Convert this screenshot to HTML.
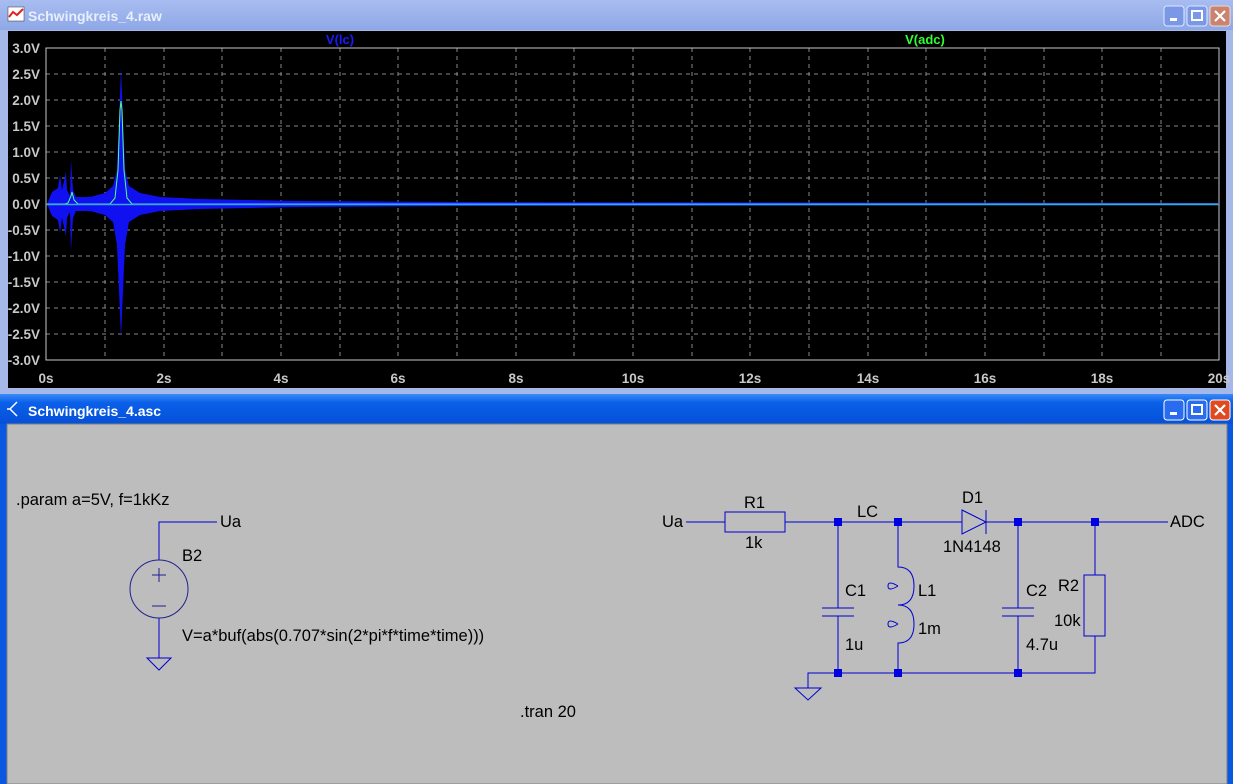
<!DOCTYPE html>
<html><head><meta charset="utf-8"><style>
body{margin:0;width:1233px;height:784px;overflow:hidden;background:#b8c8ec;font-family:"Liberation Sans",sans-serif}
svg{display:block}
</style></head><body>
<svg width="1233" height="784" viewBox="0 0 1233 784" xmlns="http://www.w3.org/2000/svg">
<defs>
<linearGradient id="ti" x1="0" y1="0" x2="0" y2="1"><stop offset="0" stop-color="#a8bcf0"/><stop offset="1" stop-color="#8ea8e6"/></linearGradient>
<linearGradient id="ta" x1="0" y1="0" x2="0" y2="1"><stop offset="0" stop-color="#3a8af8"/><stop offset="0.3" stop-color="#0a5fe8"/><stop offset="1" stop-color="#0550d8"/></linearGradient>
</defs>
<rect x="0" y="0" width="1233" height="394" fill="#a6b8e8"/>
<rect x="0" y="0" width="1233" height="30" fill="url(#ti)"/>
<g transform="translate(8,7)"><rect width="16" height="14" fill="#fff" stroke="#333" stroke-width="0.5"/><polyline points="1,10 5,5 9,8 15,2" fill="none" stroke="#e02020" stroke-width="2"/></g>
<text x="28" y="21" font-size="14" font-weight="bold" fill="#e8eefc">Schwingkreis_4.raw</text>
<rect x="1164" y="6" width="20" height="20" rx="3" fill="#7a98e6" stroke="#dfe8ff"/><rect x="1170" y="18" width="7" height="3" fill="#fff"/>
<rect x="1187" y="6" width="20" height="20" rx="3" fill="#7a98e6" stroke="#dfe8ff"/><rect x="1192" y="11" width="10" height="9" fill="none" stroke="#fff" stroke-width="2"/>
<rect x="1210" y="6" width="20" height="20" rx="3" fill="#c9836e" stroke="#f0d8d0"/><path d="M1215 11 L1225 21 M1225 11 L1215 21" stroke="#fff" stroke-width="2.2"/>
<rect x="8" y="31" width="1218" height="357" fill="#000"/>
<g stroke="#888" stroke-width="1" stroke-dasharray="4,4">
<path d="M105 48V360M164 48V360M222 48V360M281 48V360M340 48V360M398 48V360M457 48V360M516 48V360M574 48V360M633 48V360M692 48V360M750 48V360M809 48V360M868 48V360M926 48V360M985 48V360M1044 48V360M1102 48V360M1161 48V360"/>
<path d="M46 74H1219M46 100H1219M46 126H1219M46 152H1219M46 178H1219M46 204H1219M46 230H1219M46 256H1219M46 282H1219M46 308H1219M46 334H1219"/>
</g>
<rect x="46" y="48" width="1173" height="312" fill="none" stroke="#c8c8c8"/>
<g font-size="13.5" font-weight="bold" fill="#c8c8c8" text-anchor="end">
<text x="40" y="53">3.0V</text><text x="40" y="79">2.5V</text><text x="40" y="105">2.0V</text><text x="40" y="131">1.5V</text><text x="40" y="157">1.0V</text><text x="40" y="183">0.5V</text><text x="40" y="209">0.0V</text><text x="40" y="235">-0.5V</text><text x="40" y="261">-1.0V</text><text x="40" y="287">-1.5V</text><text x="40" y="313">-2.0V</text><text x="40" y="339">-2.5V</text><text x="40" y="365">-3.0V</text>
</g>
<g font-size="13.5" font-weight="bold" fill="#c8c8c8" text-anchor="middle">
<text x="46" y="383">0s</text><text x="164" y="383">2s</text><text x="281" y="383">4s</text><text x="398" y="383">6s</text><text x="516" y="383">8s</text><text x="633" y="383">10s</text><text x="750" y="383">12s</text><text x="868" y="383">14s</text><text x="985" y="383">16s</text><text x="1102" y="383">18s</text><text x="1219" y="383">20s</text>
</g>
<text x="340" y="44" font-size="13" font-weight="bold" fill="#1a1aff" text-anchor="middle">V(lc)</text>
<text x="925" y="44" font-size="13" font-weight="bold" fill="#30ff30" text-anchor="middle">V(adc)</text>
<polygon fill="#1010f0" points="47,204 52,192 58,188 60,175 62,190 66,172 67,190 70,196 71,160 73,190 76,197 90,197 105,193 113,186 117,170 119,120 121,68 123,120 125,170 129,186 140,193 160,197 200,199 300,201 460,202 1219,203 1219,205 460,206 300,207 200,209 160,211 140,215 129,222 125,245 123,290 121,338 119,290 117,245 113,222 105,215 90,211 76,211 73,218 71,250 70,212 67,218 66,236 62,218 60,233 58,220 52,216"/>
<polyline fill="none" stroke="#50ff90" stroke-width="1" points="47,204 65,204 68,203 71,196 72,192 74,200 78,204 110,204 115,198 118,170 120,110 121,101 122,110 124,170 127,198 132,204 1219,204"/>
<line x1="46" y1="204.5" x2="1219" y2="204.5" stroke="#3aa8e0" stroke-width="1.5"/>
<rect x="0" y="394" width="1233" height="390" fill="#0a58e0"/>
<rect x="0" y="394" width="1233" height="30" fill="url(#ta)"/>
<path d="M17 402 L10 409 L17 416 M10 409 H7" stroke="#fff" fill="none" stroke-width="1.5"/>
<text x="28" y="416" font-size="14" font-weight="bold" fill="#fff">Schwingkreis_4.asc</text>
<rect x="1164" y="400" width="20" height="20" rx="3" fill="#2a6cf0" stroke="#fff"/><rect x="1170" y="412" width="7" height="3" fill="#fff"/>
<rect x="1187" y="400" width="20" height="20" rx="3" fill="#2a6cf0" stroke="#fff"/><rect x="1192" y="405" width="10" height="9" fill="none" stroke="#fff" stroke-width="2"/>
<rect x="1210" y="400" width="20" height="20" rx="3" fill="#e04a20" stroke="#fff"/><path d="M1215 405 L1225 415 M1225 405 L1215 415" stroke="#fff" stroke-width="2.2"/>
<rect x="7" y="424" width="1220" height="360" fill="#bdbdbd" stroke="#808080"/>
<g stroke="#0000d0" stroke-width="1" fill="none">
<path d="M217 522H159V560M159 618V658M147 658H171L159 670Z"/>
<circle cx="159" cy="589" r="29" stroke="#202090"/>
<path d="M152 575H166M159 568V582M152 606H166" stroke="#202090"/>
<path d="M686 522H725M785 522H962M986 522H1168"/>
<rect x="725" y="512" width="60" height="20"/>
<path d="M962 510L986 522L962 534Z M986 510V534"/>
<path d="M838 522V608M822 608H854M822 616H854M838 616V673"/>
<path d="M898 522V567 Q914 567 914 586 Q914 605 898 605 Q914 605 914 624 Q914 643 898 643V673"/>
<path d="M898 586 Q888 580 888 586 Q888 592 898 586 M898 624 Q888 618 888 624 Q888 630 898 624"/>
<path d="M1018 522V608M1002 608H1034M1002 616H1034M1018 616V673"/>
<path d="M1095 522V575M1095 636V673H808V688M795 688H821L808 700Z"/>
<rect x="1084" y="575" width="21" height="61"/>
</g>
<g fill="#0000e0">
<rect x="834" y="518" width="8" height="8"/><rect x="894" y="518" width="8" height="8"/><rect x="1014" y="518" width="8" height="8"/><rect x="1091" y="518" width="8" height="8"/>
<rect x="834" y="669" width="8" height="8"/><rect x="894" y="669" width="8" height="8"/><rect x="1014" y="669" width="8" height="8"/>
</g>
<g font-size="16.5" fill="#000">
<text x="16" y="505">.param a=5V, f=1kKz</text>
<text x="220" y="527">Ua</text>
<text x="182" y="561">B2</text>
<text x="182" y="641">V=a*buf(abs(0.707*sin(2*pi*f*time*time)))</text>
<text x="520" y="717">.tran 20</text>
<text x="662" y="527">Ua</text>
<text x="744" y="508">R1</text>
<text x="745" y="548">1k</text>
<text x="857" y="517">LC</text>
<text x="962" y="503">D1</text>
<text x="943" y="552">1N4148</text>
<text x="845" y="596">C1</text>
<text x="845" y="650">1u</text>
<text x="918" y="596">L1</text>
<text x="918" y="634">1m</text>
<text x="1026" y="596">C2</text>
<text x="1026" y="650">4.7u</text>
<text x="1058" y="591">R2</text>
<text x="1054" y="626">10k</text>
<text x="1170" y="527">ADC</text>
</g>
</svg>
</body></html>
